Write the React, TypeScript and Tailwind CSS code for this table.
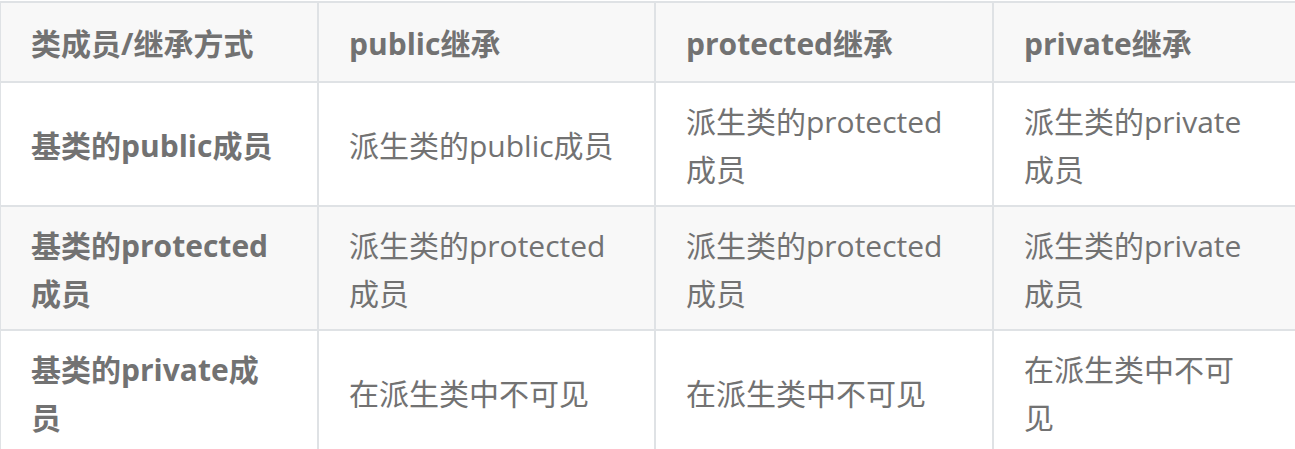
const ROWS: { head: string; cells: string[] }[] = [
  { head: "基类的public成员", cells: ["派生类的public成员", "派生类的protected成员", "派生类的private成员"] },
  { head: "基类的protected成员", cells: ["派生类的protected成员", "派生类的protected成员", "派生类的private成员"] },
  { head: "基类的private成员", cells: ["在派生类中不可见", "在派生类中不可见", "在派生类中不可见"] },
];

const HEADS = ["类成员/继承方式", "public继承", "protected继承", "private继承"];

const cell = "border-2 border-[#dfe2e5] px-[30px] align-middle text-left";

export default function App() {
  return (
    <div
      className="w-[1295px] h-[449px] overflow-hidden bg-white pt-px text-[30px] leading-[48px] text-[#727272]"
      style={{ fontFamily: '"Open Sans", "Noto Sans CJK SC", sans-serif' }}
    >
      <table className="-ml-px table-fixed border-collapse w-[1340px]">
        <colgroup>
          <col className="w-[318px]" />
          <col className="w-[337px]" />
          <col className="w-[338px]" />
          <col className="w-[347px]" />
        </colgroup>
        <thead>
          <tr className="bg-[#f8f8f8]">
            {HEADS.map((h, i) => (
              <th key={h} className={`${cell} pt-[17px] pb-[13px] font-bold ${i === 3 ? "pr-[80px]" : ""}`}>
                {h}
              </th>
            ))}
          </tr>
        </thead>
        <tbody>
          {ROWS.map((r, ri) => (
            <tr key={r.head} className={ri % 2 === 1 ? "bg-[#f8f8f8]" : "bg-white"}>
              <td className={`${cell} pt-[15px] pb-[11px] font-bold pr-[36px]`}>{r.head}</td>
              {r.cells.map((c, ci) => (
                <td key={ci} className={`${cell} pt-[15px] pb-[11px] ${ci === 2 ? "pr-[80px]" : ""}`}>
                  {c}
                </td>
              ))}
            </tr>
          ))}
        </tbody>
      </table>
    </div>
  );
}
